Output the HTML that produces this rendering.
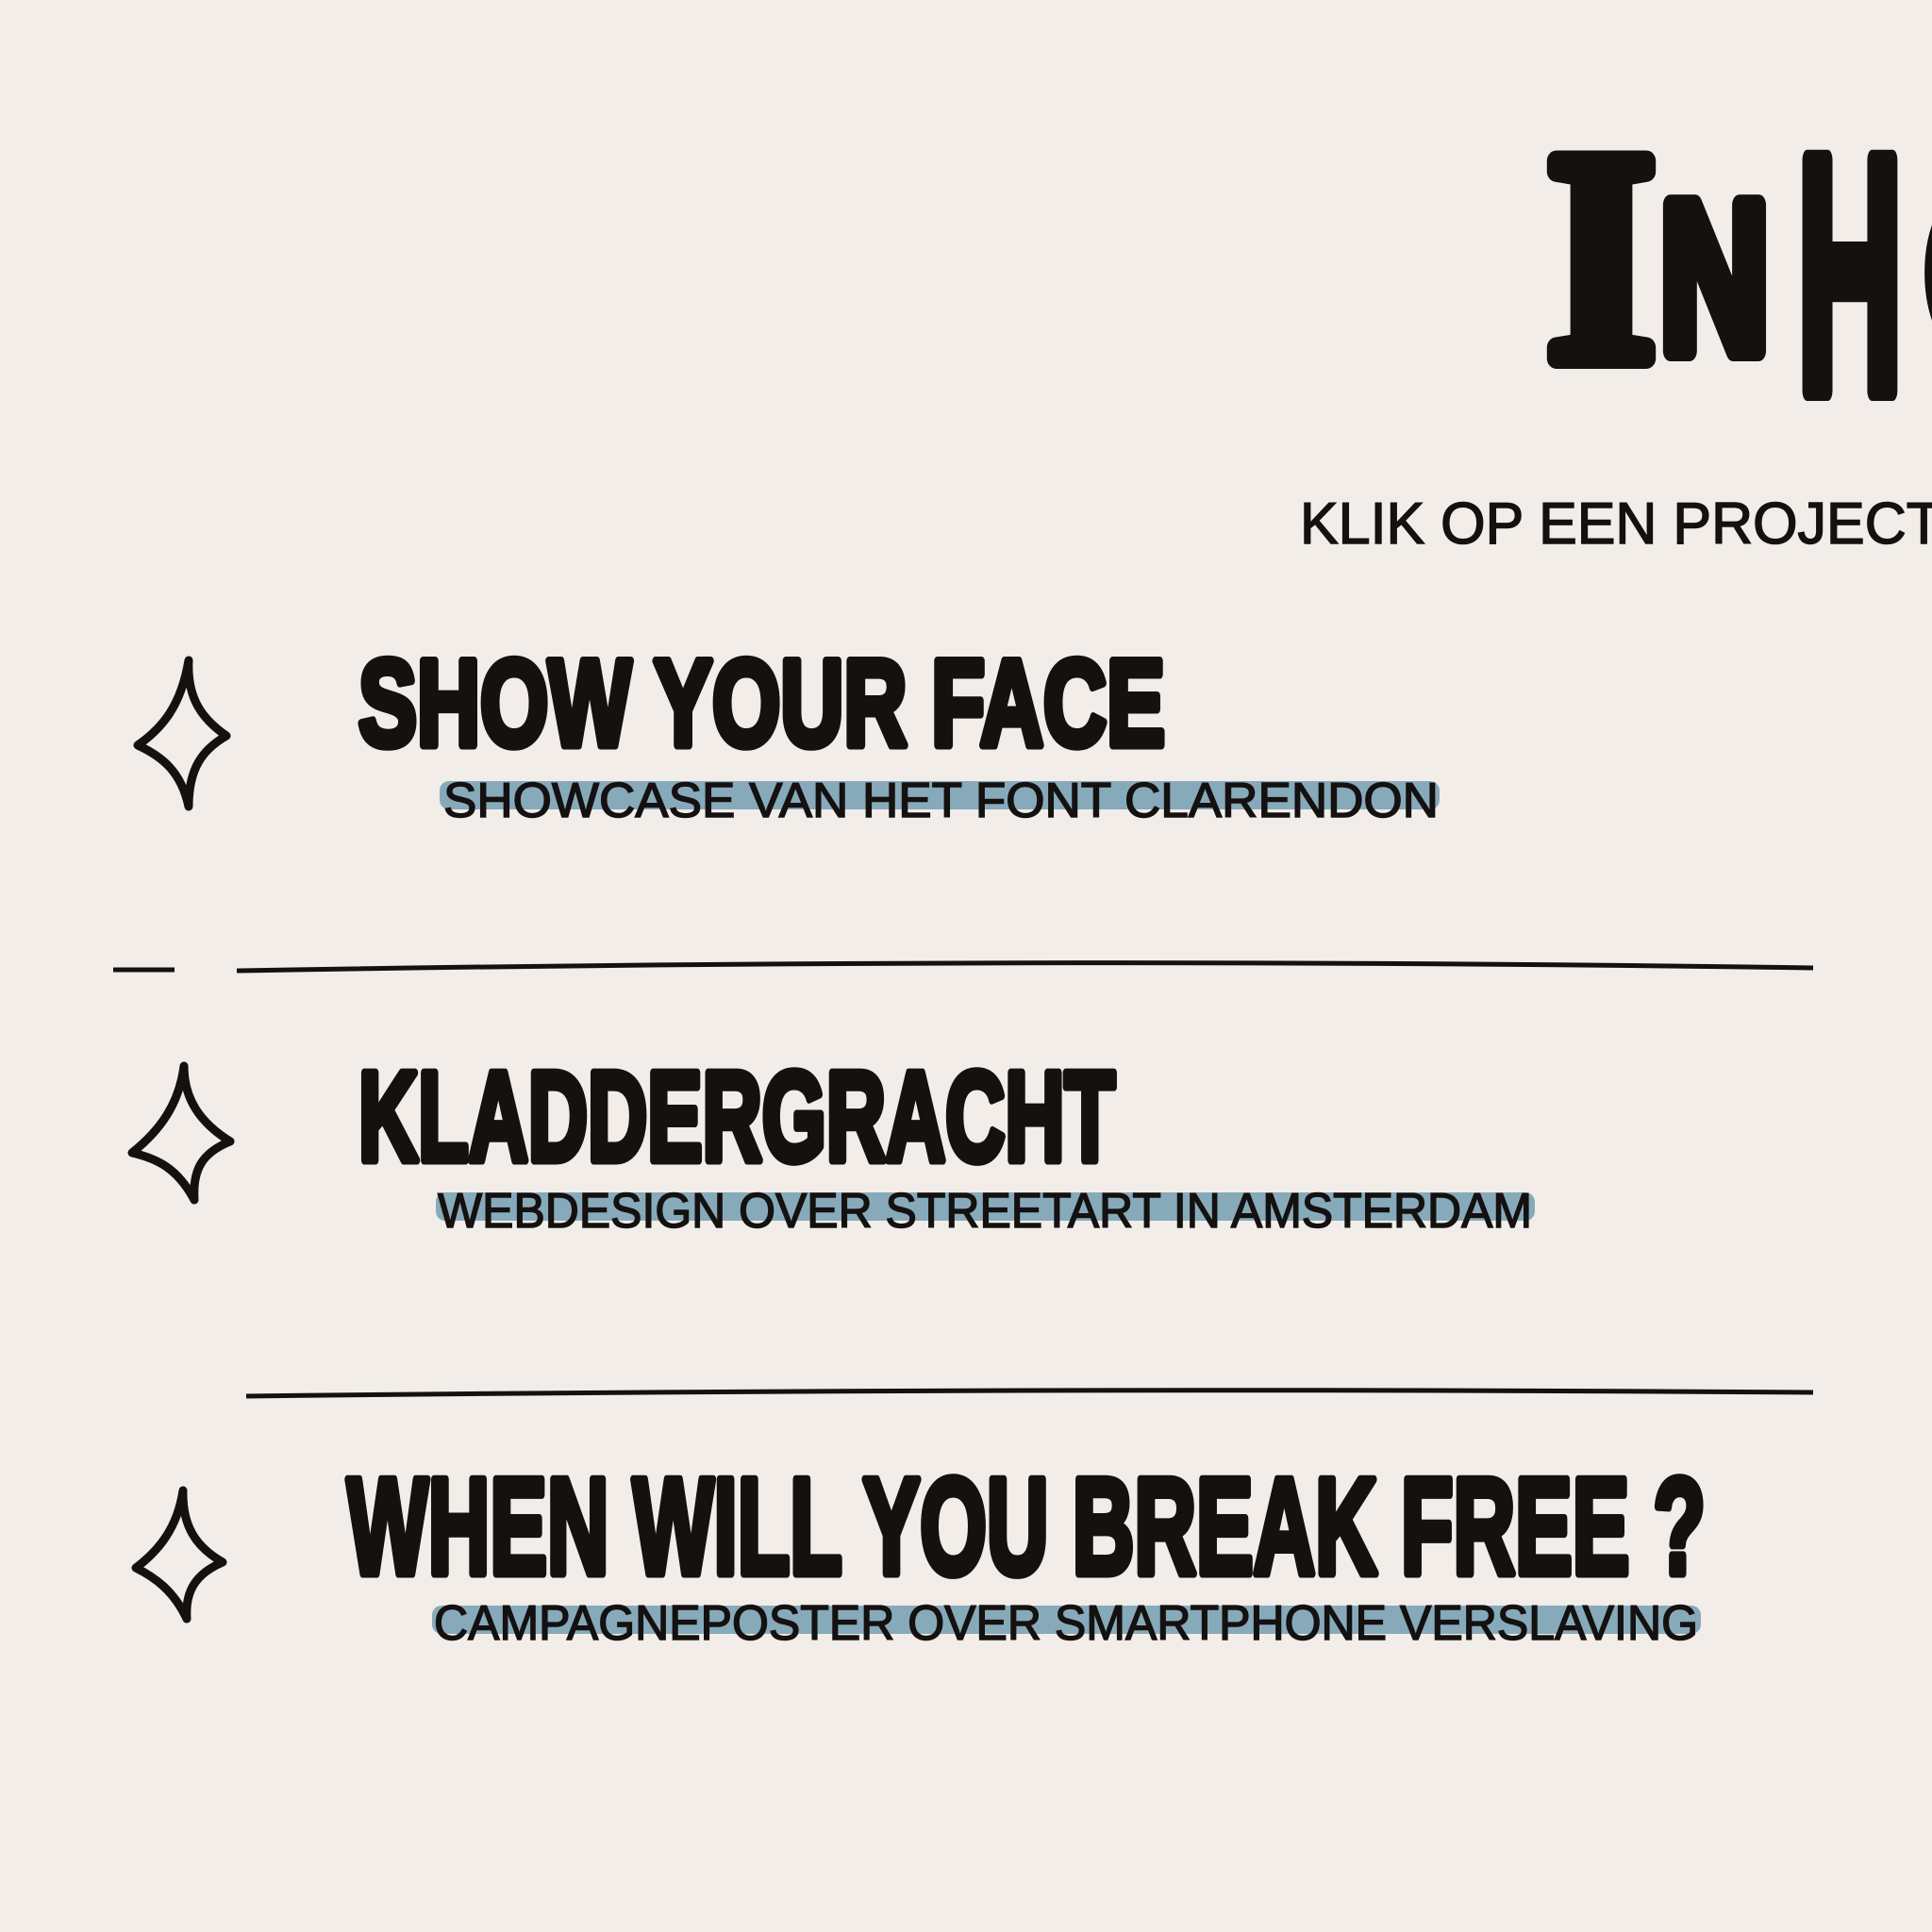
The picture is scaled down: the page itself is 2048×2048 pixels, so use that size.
<!DOCTYPE html>
<html><head><meta charset="utf-8"><style>
html,body{margin:0;padding:0;background:#f2ede8;}
svg{display:block}
.t{font-family:"Liberation Sans",sans-serif;font-weight:bold;fill:#141110;stroke:#141110;stroke-width:9;stroke-linejoin:round}
.big{stroke-width:22}
.s{font-family:"Liberation Sans",sans-serif;fill:#141110;stroke:#141110;stroke-width:1.5}
.sp{fill:none;stroke:#141110;stroke-width:9;stroke-linejoin:round;stroke-linecap:round}
</style></head><body>
<svg width="2048" height="2048" viewBox="0 0 2048 2048" xmlns="http://www.w3.org/2000/svg">
<rect width="2048" height="2048" fill="#f2ede8"/>
<text class="t big" x="1640" y="380" font-size="320" style="font-family:'Liberation Serif',serif" textLength="115" lengthAdjust="spacingAndGlyphs">I</text>
<text class="t big" x="1760" y="372" font-size="225" textLength="115" lengthAdjust="spacingAndGlyphs">N</text>
<text class="t big" x="1905" y="414" font-size="355" textLength="112" lengthAdjust="spacingAndGlyphs">H</text>
<text class="t big" x="2038" y="400" font-size="320">O</text>
<text class="s" x="1378" y="576" font-size="62" textLength="680" lengthAdjust="spacingAndGlyphs">KLIK OP EEN PROJECT</text>

<path class="sp" d="M200 700 C198 740 214 762 240 780 C214 795 200 815 200 855 C192 818 172 802 146 790 C172 772 192 748 200 700Z"/>
<path class="sp" d="M195 1130 C195 1165 212 1190 244 1210 C214 1222 204 1240 206 1272 C188 1238 166 1228 140 1222 C170 1198 190 1170 195 1130Z"/>
<path class="sp" d="M194 1580 C193 1618 208 1640 236 1656 C208 1668 196 1686 198 1716 C184 1686 164 1672 144 1662 C168 1644 188 1620 194 1580Z"/>

<rect x="466" y="828" width="1060" height="30" rx="10" fill="#87aabb"/>
<text class="t" x="380" y="790" font-size="130" textLength="855" lengthAdjust="spacingAndGlyphs">SHOW YOUR FACE</text>
<text class="s" x="470" y="866" font-size="52" textLength="1055" lengthAdjust="spacingAndGlyphs">SHOWCASE  VAN HET  FONT  CLARENDON</text>
<line x1="120" y1="1028" x2="185" y2="1028" stroke="#141110" stroke-width="5"/>
<path d="M251 1029 Q1100 1014 1922 1026" stroke="#141110" stroke-width="5" fill="none"/>

<rect x="462" y="1264" width="1165" height="30" rx="10" fill="#87aabb"/>
<text class="t" x="380" y="1230" font-size="135" textLength="802" lengthAdjust="spacingAndGlyphs">KLADDERGRACHT</text>
<text class="s" x="464" y="1301" font-size="52" textLength="1160" lengthAdjust="spacingAndGlyphs">WEBDESIGN  OVER STREETART  IN AMSTERDAM</text>
<path d="M261 1480 Q1100 1470 1922 1476" stroke="#141110" stroke-width="5" fill="none"/>

<rect x="458" y="1702" width="1345" height="30" rx="10" fill="#87aabb"/>
<text class="t" x="368" y="1668" font-size="145" textLength="1440" lengthAdjust="spacingAndGlyphs">WHEN WILL YOU BREAK FREE ?</text>
<text class="s" x="460" y="1738" font-size="52" textLength="1340" lengthAdjust="spacingAndGlyphs">CAMPAGNEPOSTER  OVER SMARTPHONE  VERSLAVING</text>
</svg>
</body></html>
